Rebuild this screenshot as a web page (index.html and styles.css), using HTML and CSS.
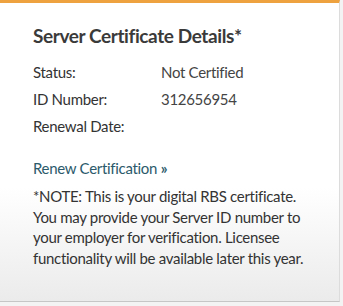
FILE: index.html
```html
<!DOCTYPE html>
<html lang="en">
<head>
    <meta charset="UTF-8">
    <meta name="viewport" content="width=device-width, initial-scale=1.0">
    <title>Server Certificate</title>
    <link rel="stylesheet" href="styles.css">
</head>
<body>
    <!-- Certificate Card -->
    <div class="card">
        <h2>Server Certificate Details*</h2>

        <div class="details">
            <div class="row">
                <span class="label">Status:</span>
                <span class="value">Not Certified</span>
            </div>
            <div class="row">
                <span class="label">ID Number:</span>
                <span class="value">312656954</span>
            </div>
            <div class="row">
                <span class="label">Renewal Date:</span>
                <span class="value"></span>
            </div>
        </div>

        <a class="renew" href="#renew">Renew Certification <b>&raquo;</b></a>

        <p class="note">*NOTE: This is your digital RBS certificate. You may provide your Server ID number to your employer for verification. Licensee functionality will be available later this year.</p>
    </div>
</body>
</html>
```

FILE: styles.css
```css
/* General Styles */
body {
    font-family: Lato, "Open Sans", sans-serif;
    margin: 0;
    padding: 0;
    background-color: #f3f3f3;
    color: #333;
}

/* Card */
.card {
    width: 340px;
    height: 302px;
    box-sizing: border-box;
    border-top: 3px solid #eea23f;
    border-right: 1px solid #dcdcdc;
    border-bottom: 1px solid #c6c6c6;
    padding: 21px 0 0 33px;
    background: linear-gradient(to bottom, #ffffff 0%, #ffffff 62%, #ebebeb 100%);
}

.card h2 {
    margin: 0 0 10px;
    font-size: 19px;
    font-weight: 700;
    letter-spacing: -0.4px;
    color: #3a3a3a;
    line-height: 24px;
}

/* Details */
.details {
    font-size: 15px;
    letter-spacing: -0.3px;
}

.row {
    display: flex;
    height: 27px;
    align-items: center;
}

.label {
    width: 128px;
}

.value {
    color: #444;
}

/* Renew link */
.renew {
    display: block;
    margin-top: 20px;
    font-size: 15px;
    letter-spacing: -0.3px;
    color: #2c5a6b;
    text-decoration: none;
}

/* Note */
.note {
    margin: 9px 0 0;
    font-size: 15px;
    letter-spacing: -0.3px;
    line-height: 20.6px;
    width: 280px;
}
```
